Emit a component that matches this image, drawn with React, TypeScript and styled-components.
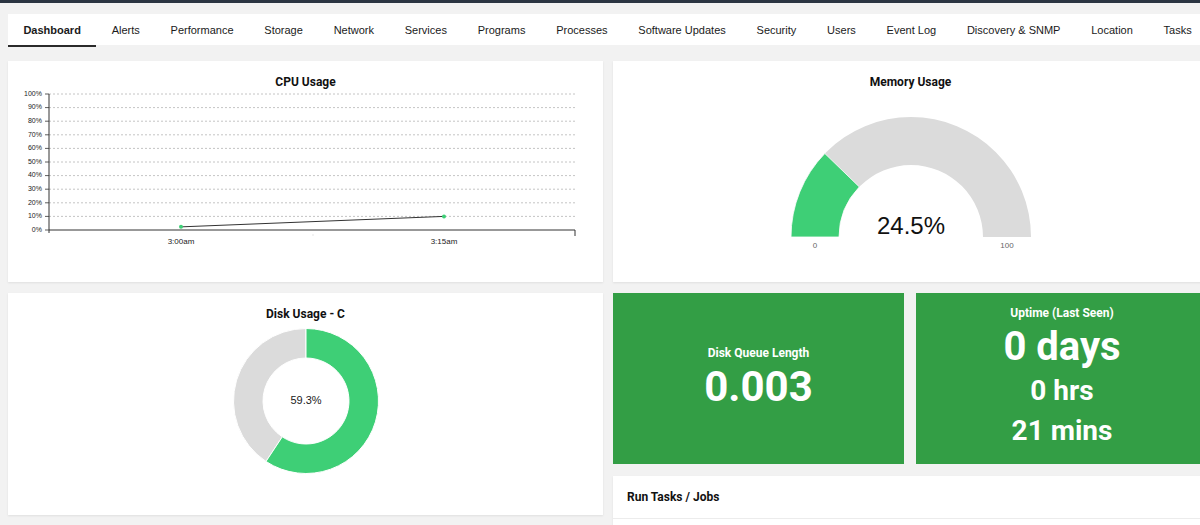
import React from "react";
import styled, { createGlobalStyle } from "styled-components";

const Global = createGlobalStyle`
  html, body { margin: 0; padding: 0; overflow: hidden; background: #f2f2f2; }
  body { font-family: "Liberation Sans", Arial, sans-serif; color: #111; }
`;

const TopBar = styled.div`
  height: 3px;
  background: #2b3542;
`;

const Page = styled.div`
  padding: 11px 0 0 8px;
  width: 1200px;
`;

const TabList = styled.nav`
  display: flex;
  height: 31px;
  background: #fff;
  width: 1200px;
`;

const Tab = styled.div<{ $active?: boolean }>`
  position: relative;
  display: flex;
  align-items: center;
  padding: 0 15.4px;
  font-size: 11px;
  font-weight: ${(p) => (p.$active ? 700 : 400)};
  color: #1a1a1a;
  white-space: nowrap;
  &::after {
    content: "";
    position: absolute;
    left: 0;
    right: 0;
    bottom: -2px;
    height: 2px;
    background: ${(p) => (p.$active ? "#2a2a2a" : "transparent")};
  }
`;

const Columns = styled.div`
  display: grid;
  grid-template-columns: 595px 595px;
  column-gap: 10px;
  margin-top: 16px;
  align-items: start;
`;

const Column = styled.div<{ $gap: number }>`
  display: flex;
  flex-direction: column;
  gap: ${(p) => p.$gap}px;
`;

const Card = styled.section<{ $h: number }>`
  background: #fff;
  height: ${(p) => p.$h}px;
  box-shadow: 0 1px 2px rgba(0, 0, 0, 0.08);
  display: flex;
  flex-direction: column;
  align-items: center;
`;

const CardTitle = styled.h3`
  margin: 0;
  padding-top: 14px;
  line-height: 14px;
  font-family: Roboto, "Liberation Sans", sans-serif;
  font-weight: 700;
  font-size: 12px;
  text-align: center;
  color: #111;
`;

const ChartSvg = styled.svg<{ $mt: number }>`
  display: block;
  margin-top: ${(p) => p.$mt}px;
  font-family: "Liberation Sans", Arial, sans-serif;
`;

const StatRow = styled.div`
  display: grid;
  grid-template-columns: 291px 1fr;
  column-gap: 12px;
  height: 171px;
`;

const StatCard = styled.div`
  background: #339e45;
  color: #fff;
  font-family: Roboto, "Liberation Sans", sans-serif;
  font-weight: 700;
  display: flex;
  flex-direction: column;
  align-items: center;
  justify-content: center;
  text-align: center;
`;

const StatLabel = styled.div`
  font-size: 12px;
  line-height: 14px;
`;

const StatValue = styled.div<{ $size: number; $lh: number; $mt?: number }>`
  font-size: ${(p) => p.$size}px;
  line-height: ${(p) => p.$lh}px;
  margin-top: ${(p) => p.$mt ?? 0}px;
`;

const TasksCard = styled.section`
  background: #fff;
  box-shadow: 0 1px 2px rgba(0, 0, 0, 0.08);
  margin-top: 1px;
`;

const TasksHeader = styled.div`
  height: 42px;
  display: flex;
  align-items: center;
  padding-left: 14px;
  border-bottom: 1px solid #ececec;
  font-family: Roboto, "Liberation Sans", sans-serif;
  font-weight: 700;
  font-size: 12px;
  color: #111;
`;

const TasksBody = styled.div`
  height: 6px;
`;

const tabs = [
  "Dashboard",
  "Alerts",
  "Performance",
  "Storage",
  "Network",
  "Services",
  "Programs",
  "Processes",
  "Software Updates",
  "Security",
  "Users",
  "Event Log",
  "Discovery & SNMP",
  "Location",
  "Tasks",
];

const GREEN = "#3ecf76";
const GREY = "#dbdbdb";

function CpuChart() {
  const x0 = 41;
  const x1 = 567;
  const yZero = 141;
  const step = 13.6;
  const yOf = (v: number) => yZero - (v / 10) * step;
  const pts = [
    { x: 173, v: 2.3 },
    { x: 436, v: 10 },
  ];
  return (
    <ChartSvg $mt={0} width={595} height={168} viewBox="0 0 595 168">
      {Array.from({ length: 11 }, (_, k) => {
        const y = yZero - k * step;
        return (
          <g key={k}>
            {k > 0 && (
              <line x1={x0} x2={x1} y1={y} y2={y} stroke="#b5b5b5" strokeWidth={0.8} strokeDasharray="2 2" />
            )}
            <line x1={37} x2={x0} y1={y} y2={y} stroke="#333" strokeWidth={0.8} />
            <text x={34} y={y} fontSize={7} textAnchor="end" dominantBaseline="middle" fill="#222">
              {k * 10}%
            </text>
          </g>
        );
      })}
      <line x1={x0} x2={x0} y1={5} y2={144} stroke="#333" strokeWidth={1} />
      <line x1={x0} x2={x1} y1={yZero} y2={yZero} stroke="#333" strokeWidth={1} />
      <line x1={x1} x2={x1} y1={yZero} y2={147} stroke="#333" strokeWidth={1} />
      <line x1={305} x2={305} y1={145} y2={147} stroke="#e5e5e5" strokeWidth={1} />
      <polyline
        points={pts.map((p) => `${p.x},${yOf(p.v)}`).join(" ")}
        fill="none"
        stroke="#333"
        strokeWidth={1}
      />
      {pts.map((p) => (
        <circle key={p.x} cx={p.x} cy={yOf(p.v)} r={2} fill={GREEN} />
      ))}
      <text x={173} y={153} fontSize={8} textAnchor="middle" dominantBaseline="middle" fill="#222">
        3:00am
      </text>
      <text x={436} y={153} fontSize={8} textAnchor="middle" dominantBaseline="middle" fill="#222">
        3:15am
      </text>
    </ChartSvg>
  );
}

function polar(cx: number, cy: number, r: number, deg: number) {
  const a = (deg * Math.PI) / 180;
  return [cx + r * Math.cos(a), cy - r * Math.sin(a)];
}

function Gauge({ value }: { value: number }) {
  const cx = 150;
  const cy = 124;
  const R = 120;
  const r = 72;
  const endDeg = 180 - (value / 100) * 180;
  const [ox, oy] = polar(cx, cy, R, endDeg);
  const [ix, iy] = polar(cx, cy, r, endDeg);
  const grey = `M ${cx - R} ${cy} A ${R} ${R} 0 0 1 ${cx + R} ${cy} L ${cx + r} ${cy} A ${r} ${r} 0 0 0 ${cx - r} ${cy} Z`;
  const green = `M ${cx - R} ${cy} A ${R} ${R} 0 0 1 ${ox} ${oy} L ${ix} ${iy} A ${r} ${r} 0 0 0 ${cx - r} ${cy} Z`;
  return (
    <ChartSvg $mt={24} width={300} height={145} viewBox="0 0 300 145">
      <path d={grey} fill={GREY} />
      <path d={green} fill={GREEN} stroke="#fff" strokeWidth={0.8} />
      <text x={cx} y={115} fontSize={24} textAnchor="middle" dominantBaseline="middle" fill="#111">
        {value}%
      </text>
      <text x={54} y={133} fontSize={8} textAnchor="middle" dominantBaseline="middle" fill="#666">
        0
      </text>
      <text x={246} y={133} fontSize={8} textAnchor="middle" dominantBaseline="middle" fill="#666">
        100
      </text>
    </ChartSvg>
  );
}

function Donut({ value }: { value: number }) {
  const c = 75;
  const R = 72.5;
  const r = 43;
  const pt = (rad: number, frac: number) => {
    const a = frac * 2 * Math.PI;
    return [c + rad * Math.sin(a), c - rad * Math.cos(a)];
  };
  const slice = (from: number, to: number) => {
    const [a1, b1] = pt(R, from);
    const [a2, b2] = pt(R, to);
    const [a3, b3] = pt(r, to);
    const [a4, b4] = pt(r, from);
    const large = to - from > 0.5 ? 1 : 0;
    return `M ${a1} ${b1} A ${R} ${R} 0 ${large} 1 ${a2} ${b2} L ${a3} ${b3} A ${r} ${r} 0 ${large} 0 ${a4} ${b4} Z`;
  };
  const f = value / 100;
  return (
    <ChartSvg $mt={5} width={150} height={150} viewBox="0 0 150 150">
      <path d={slice(f, 1)} fill={GREY} stroke="#fff" strokeWidth={1} />
      <path d={slice(0, f)} fill={GREEN} stroke="#fff" strokeWidth={1} />
      <text x={c} y={c} fontSize={11} textAnchor="middle" dominantBaseline="middle" fill="#222">
        {value}%
      </text>
    </ChartSvg>
  );
}

export default function App() {
  return (
    <>
      <Global />
      <TopBar />
      <Page>
        <TabList>
          {tabs.map((t, i) => (
            <Tab key={t} $active={i === 0}>
              {t}
            </Tab>
          ))}
        </TabList>
        <Columns>
          <Column $gap={11}>
            <Card $h={221}>
              <CardTitle>CPU Usage</CardTitle>
              <CpuChart />
            </Card>
            <Card $h={222}>
              <CardTitle>Disk Usage - C</CardTitle>
              <Donut value={59.3} />
            </Card>
          </Column>
          <Column $gap={11}>
            <Card $h={221}>
              <CardTitle>Memory Usage</CardTitle>
              <Gauge value={24.5} />
            </Card>
            <StatRow>
              <StatCard>
                <StatLabel>Disk Queue Length</StatLabel>
                <StatValue $size={42} $lh={48} $mt={3}>
                  0.003
                </StatValue>
              </StatCard>
              <StatCard>
                <StatLabel>Uptime (Last Seen)</StatLabel>
                <StatValue $size={40} $lh={46} $mt={4}>
                  0 days
                </StatValue>
                <StatValue $size={28} $lh={40} $mt={1}>
                  0 hrs
                </StatValue>
                <StatValue $size={28} $lh={40}>
                  21 mins
                </StatValue>
              </StatCard>
            </StatRow>
            <TasksCard>
              <TasksHeader>Run Tasks / Jobs</TasksHeader>
              <TasksBody />
            </TasksCard>
          </Column>
        </Columns>
      </Page>
    </>
  );
}
